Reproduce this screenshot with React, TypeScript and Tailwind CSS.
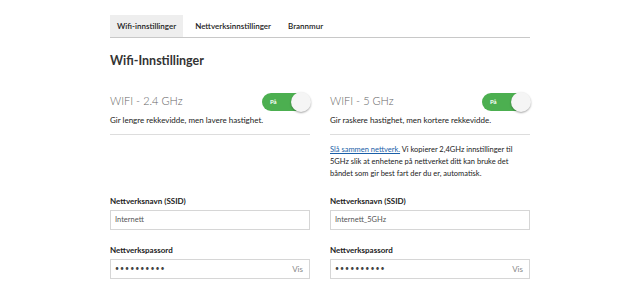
import React from "react";

function Toggle() {
  return (
    <div className="relative w-[48px] h-[18px] rounded-full bg-[#4caf50] flex items-center">
      <span className="ml-[8px] text-[6px] font-bold text-white">På</span>
      <span className="absolute right-[-1px] top-[-1px] w-[20px] h-[20px] rounded-full bg-[#f5f5f5] shadow-[0_1px_2px_rgba(0,0,0,0.35)]" />
    </div>
  );
}

function Field({ label, value, password }: { label: string; value: string; password?: boolean }) {
  return (
    <div className="flex flex-col">
      <label className="text-[8px] font-bold text-[#222] leading-none mb-[5px]">{label}</label>
      <div className="h-[20px] border border-[#d6d6d6] flex items-center justify-between pl-[4px] pr-[6px]">
        <span className={password ? "text-[7px] tracking-[1px] text-[#444]" : "text-[7.5px] text-[#555]"}>
          {value}
        </span>
        {password && <span className="text-[8px] text-[#888]">Vis</span>}
      </div>
    </div>
  );
}

function Column({
  title,
  desc,
  ssid,
  extra,
}: {
  title: string;
  desc: string;
  ssid: string;
  extra?: React.ReactNode;
}) {
  return (
    <div className="w-[200px] flex flex-col">
      <div className="h-[18px] flex items-center justify-between">
        <span className="text-[11px] text-[#666] font-light">{title}</span>
        <Toggle />
      </div>
      <p className="mt-[5px] text-[8px] text-[#222] leading-none">{desc}</p>
      <div className="mt-[10px] border-t border-[#ddd]" />
      <div className="h-[62px] pt-[9px]">{extra}</div>
      <Field label="Nettverksnavn (SSID)" value={ssid} />
      <div className="h-[16px]" />
      <Field label="Nettverkspassord" value="••••••••••" password />
    </div>
  );
}

export default function App() {
  return (
    <div className="w-[625px] h-[306px] bg-white font-['Lato',sans-serif]">
      <div className="pl-[110px] pt-[15px]">
        <div className="w-[420px] flex border-b border-[#c8c8c8] h-[23px]">
          <div className="bg-[#eeeeee] px-[7px] shrink-0 whitespace-nowrap flex items-center text-[8px] font-semibold text-[#222]">
            Wifi-innstillinger
          </div>
          <div className="px-[12px] shrink-0 whitespace-nowrap flex items-center text-[8px] font-semibold text-[#222]">
            Nettverksinnstillinger
          </div>
          <div className="px-[5px] shrink-0 whitespace-nowrap flex items-center text-[8px] font-semibold text-[#222]">
            Brannmur
          </div>
        </div>
        <h1 className="mt-[17px] text-[12.5px] font-bold text-[#333] leading-none">Wifi-Innstillinger</h1>
        <div className="mt-[25px] flex gap-[20px]">
          <Column
            title="WIFI - 2.4 GHz"
            desc="Gir lengre rekkevidde, men lavere hastighet."
            ssid="Internett"
          />
          <Column
            title="WIFI - 5 GHz"
            desc="Gir raskere hastighet, men kortere rekkevidde."
            ssid="Internett_5GHz"
            extra={
              <p className="text-[7.5px] leading-[12px] text-[#222]">
                <span className="text-[#1a5fa8] underline">Slå sammen nettverk.</span> Vi kopierer 2,4GHz innstillinger
                til 5GHz slik at enhetene på nettverket ditt kan bruke det båndet som gir best fart der du er, automatisk.
              </p>
            }
          />
        </div>
      </div>
    </div>
  );
}
